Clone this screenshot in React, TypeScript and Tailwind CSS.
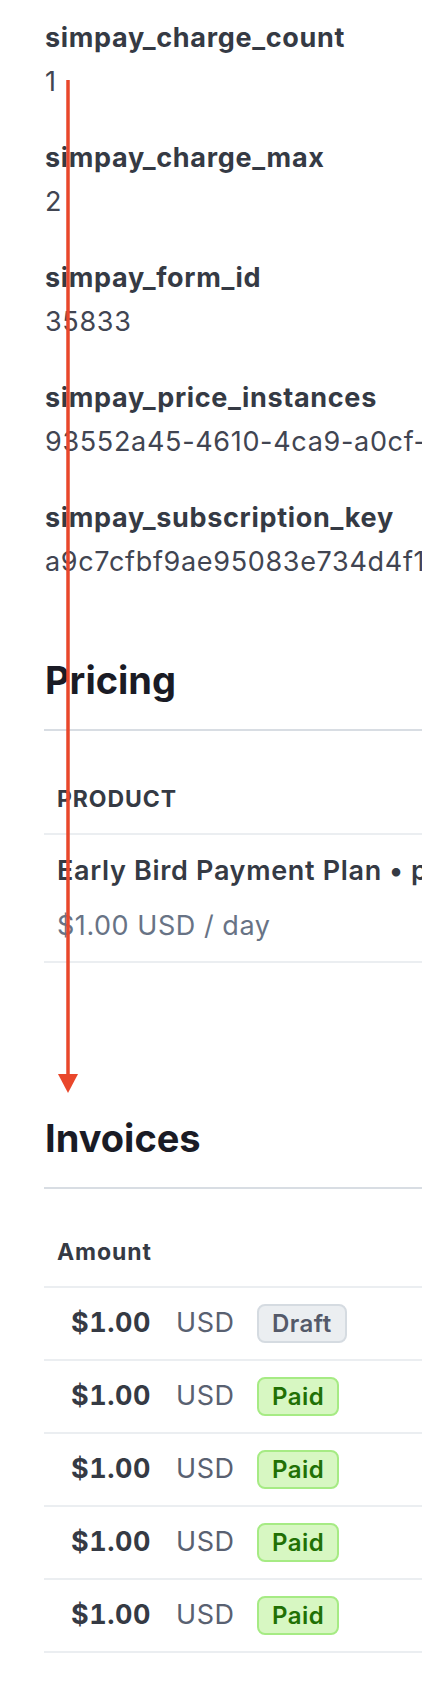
import React from "react";

const metadata = [
  { key: "simpay_charge_count", value: "1" },
  { key: "simpay_charge_max", value: "2" },
  { key: "simpay_form_id", value: "35833" },
  { key: "simpay_price_instances", value: "93552a45-4610-4ca9-a0cf-3b1e6d2f0a7c" },
  { key: "simpay_subscription_key", value: "a9c7cfbf9ae95083e734d4f1c2b8e6a0" },
];

const invoices = [
  { amount: "$1.00", currency: "USD", status: "Draft" },
  { amount: "$1.00", currency: "USD", status: "Paid" },
  { amount: "$1.00", currency: "USD", status: "Paid" },
  { amount: "$1.00", currency: "USD", status: "Paid" },
  { amount: "$1.00", currency: "USD", status: "Paid" },
];

function StatusBadge({ status }: { status: string }) {
  if (status === "Paid") {
    return (
      <span className="inline-flex h-[39px] items-center rounded-[8px] border-2 border-[#a6eb84] bg-[#d7f7c2] px-[13px] text-[24px] font-semibold tracking-[0.02em] text-[#217005]">
        Paid
      </span>
    );
  }
  return (
    <span className="inline-flex h-[39px] items-center rounded-[8px] border-2 border-[#d5dbe1] bg-[#ebeef1] px-[13px] text-[24px] font-semibold tracking-[0.02em] text-[#545969]">
      {status}
    </span>
  );
}

export default function App() {
  return (
    <div
      className="relative h-[1692px] w-full overflow-hidden bg-white whitespace-nowrap"
      style={{ fontFamily: "Inter, 'Noto Sans', sans-serif" }}
    >
      <div className="w-[900px] pl-[44px] pt-[22px]">
        {/* Metadata */}
        <div className="flex flex-col gap-[44px] pl-[1px]">
          {metadata.map((m) => (
            <div key={m.key} className="flex flex-col gap-[12px]">
              <div className="text-[27px] font-bold leading-8 tracking-[0.025em] text-[#353a44]">{m.key}</div>
              <div className="text-[27px] leading-8 tracking-[0.025em] text-[#414552]">{m.value}</div>
            </div>
          ))}
        </div>

        {/* Pricing */}
        <h2 className="mt-[78px] pl-[1px] text-[38px] font-bold leading-[48px] text-[#1a1b25]">Pricing</h2>
        <div className="mt-[25px] border-b-2 border-[#d8dde3]" />
        <div className="mt-[54px] border-b-2 border-[#ebeef1] pb-[20px] pl-[13px] text-[23px] font-bold uppercase leading-7 tracking-[0.04em] text-[#353a44]">
          Product
        </div>
        <div className="border-b-2 border-[#ebeef1] pb-[19px] pl-[13px] pt-[20px]">
          <div className="text-[27px] font-semibold leading-8 tracking-[0.025em] text-[#353a44]">
            Early Bird Payment Plan • price_1PqXhGBc4H7sLk2
          </div>
          <div className="mt-[23px] text-[27px] leading-8 tracking-[0.02em] text-[#687385]">$1.00 USD / day</div>
        </div>

        {/* Invoices */}
        <h2 className="mt-[151px] pl-[1px] text-[38px] font-bold leading-[48px] text-[#1a1b25]">Invoices</h2>
        <div className="mt-[25px] border-b-2 border-[#d8dde3]" />
        <div className="mt-[49px] border-b-2 border-[#ebeef1] pb-[20px] pl-[13px] text-[23px] font-bold leading-7 tracking-[0.04em] text-[#353a44]">
          Amount
        </div>
        {invoices.map((inv, i) => (
          <div key={i} className="flex h-[73px] items-center border-b-2 border-[#ebeef1] pl-[27px]">
            <span className="w-[105px] text-[27px] font-bold tabular-nums tracking-[0.02em] text-[#353a44]">{inv.amount}</span>
            <span className="w-[81px] text-[27px] tracking-[0.02em] text-[#596171]">{inv.currency}</span>
            <StatusBadge status={inv.status} />
          </div>
        ))}
      </div>

      {/* annotation arrow */}
      <svg
        className="pointer-events-none absolute left-0 top-0"
        width="120"
        height="1100"
        viewBox="0 0 120 1100"
      >
        <line x1="68" y1="80" x2="68" y2="1076" stroke="#e9472b" strokeWidth="3.5" />
        <polygon points="58,1074 78,1074 68,1093" fill="#e9472b" />
      </svg>
    </div>
  );
}
